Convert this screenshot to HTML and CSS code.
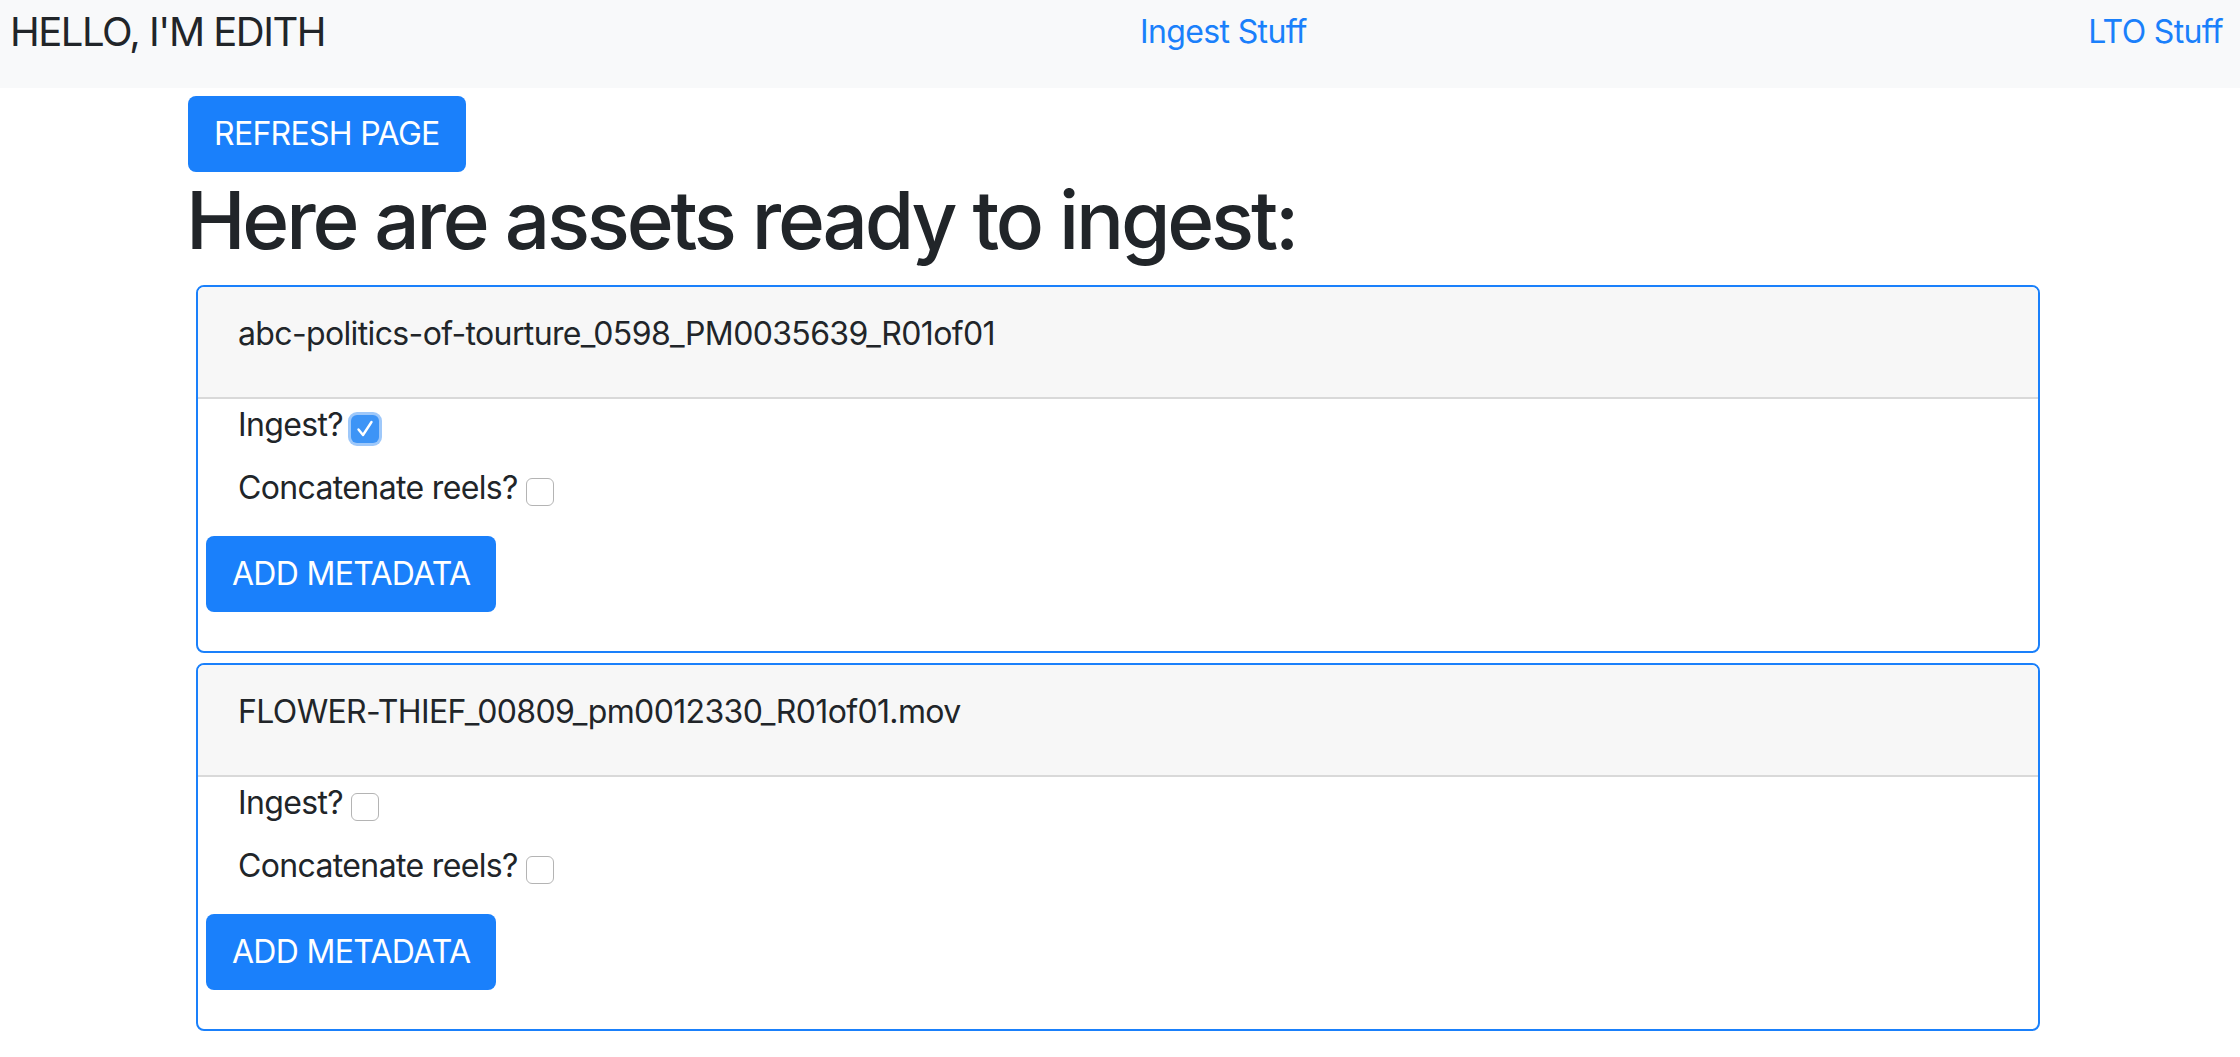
FILE: index.html
```html
<!DOCTYPE html>
<html lang="en">
<head>
<meta charset="utf-8">
<title>Ingest</title>
<link rel="stylesheet" href="styles.css">
</head>
<body>
<nav class="navbar">
  <span class="brand">HELLO, I'M EDITH</span>
  <a class="nav-link" href="#">Ingest Stuff</a>
  <a class="nav-link nav-link-end" href="#">LTO Stuff</a>
</nav>
<main class="container">
  <button class="btn btn-refresh" type="button">REFRESH PAGE</button>
  <h1 class="title">Here are assets ready to ingest:</h1>

  <section class="card">
    <div class="card-header">abc-politics-of-tourture_0598_PM0035639_R01of01</div>
    <div class="card-body">
      <label class="check-row">Ingest?<span class="checkbox checked"><svg viewBox="0 0 28 28" width="28" height="28"><path d="M7.5 14.5 L12 20 L20.5 7" fill="none" stroke="#fff" stroke-width="2.4" stroke-linecap="round" stroke-linejoin="round"/></svg></span></label>
      <label class="check-row">Concatenate reels?<span class="checkbox"></span></label>
      <button class="btn btn-meta" type="button">ADD METADATA</button>
    </div>
  </section>

  <section class="card">
    <div class="card-header">FLOWER-THIEF_00809_pm0012330_R01of01.mov</div>
    <div class="card-body">
      <label class="check-row">Ingest?<span class="checkbox"></span></label>
      <label class="check-row">Concatenate reels?<span class="checkbox"></span></label>
      <button class="btn btn-meta" type="button">ADD METADATA</button>
    </div>
  </section>
</main>
</body>
</html>
```
FILE: styles.css
```css
html, body {
  margin: 0;
  padding: 0;
  background: #ffffff;
}

body {
  font-family: Inter, "Liberation Sans", sans-serif;
  color: #212529;
  font-size: 32px;
  line-height: 48px;
  letter-spacing: -0.02em;
}

.navbar {
  display: flex;
  align-items: flex-start;
  height: 88px;
  box-sizing: border-box;
  padding: 8px 17px 0 10px;
  background: #f8f9fa;
}

.brand {
  flex: 0 0 1130px;
  font-size: 40px;
  line-height: 48px;
  letter-spacing: -0.037em;
  color: #212529;
}

.nav-link {
  color: #1a80fb;
  text-decoration: none;
  font-size: 32px;
  line-height: 48px;
}

.nav-link-end {
  margin-left: auto;
}

.container {
  width: 1860px;
  margin: 0 auto;
  padding-top: 8px;
}

.btn {
  display: block;
  box-sizing: border-box;
  height: 76px;
  border: none;
  border-radius: 8px;
  background: #1a80fb;
  color: #ffffff;
  font-family: inherit;
  font-size: 32px;
  line-height: 48px;
  letter-spacing: -0.022em;
  padding: 0 26px;
  cursor: pointer;
}

.btn-refresh {
  margin-left: -2px;
}

.title {
  margin: 0 0 17px -4px;
  font-size: 80px;
  line-height: 96px;
  font-weight: 500;
  letter-spacing: -0.04em;
  color: #212529;
}

.card {
  margin: 0 10px 10px 6px;
  border: 2px solid #1a80fb;
  border-radius: 8px;
  overflow: hidden;
}

.card-header {
  padding: 23px 40px 39px 40px;
  background: #f7f7f7;
  border-bottom: 2px solid #d9d9d9;
}

.card-body {
  padding: 2px 8px 39px 8px;
}

.check-row {
  display: flex;
  align-items: flex-start;
  margin: 0 0 15px 32px;
}

.checkbox {
  box-sizing: border-box;
  width: 28px;
  height: 28px;
  margin: 14px 0 0 8px;
  border: 1.5px solid #b4b4b4;
  border-radius: 6px;
  background: #ffffff;
  display: flex;
}

.checkbox.checked {
  border: none;
  background: #3d94f6;
  box-shadow: 0 0 0 3px #9ec8fa;
}

.btn-meta {
  margin-top: 24px;
}
```
